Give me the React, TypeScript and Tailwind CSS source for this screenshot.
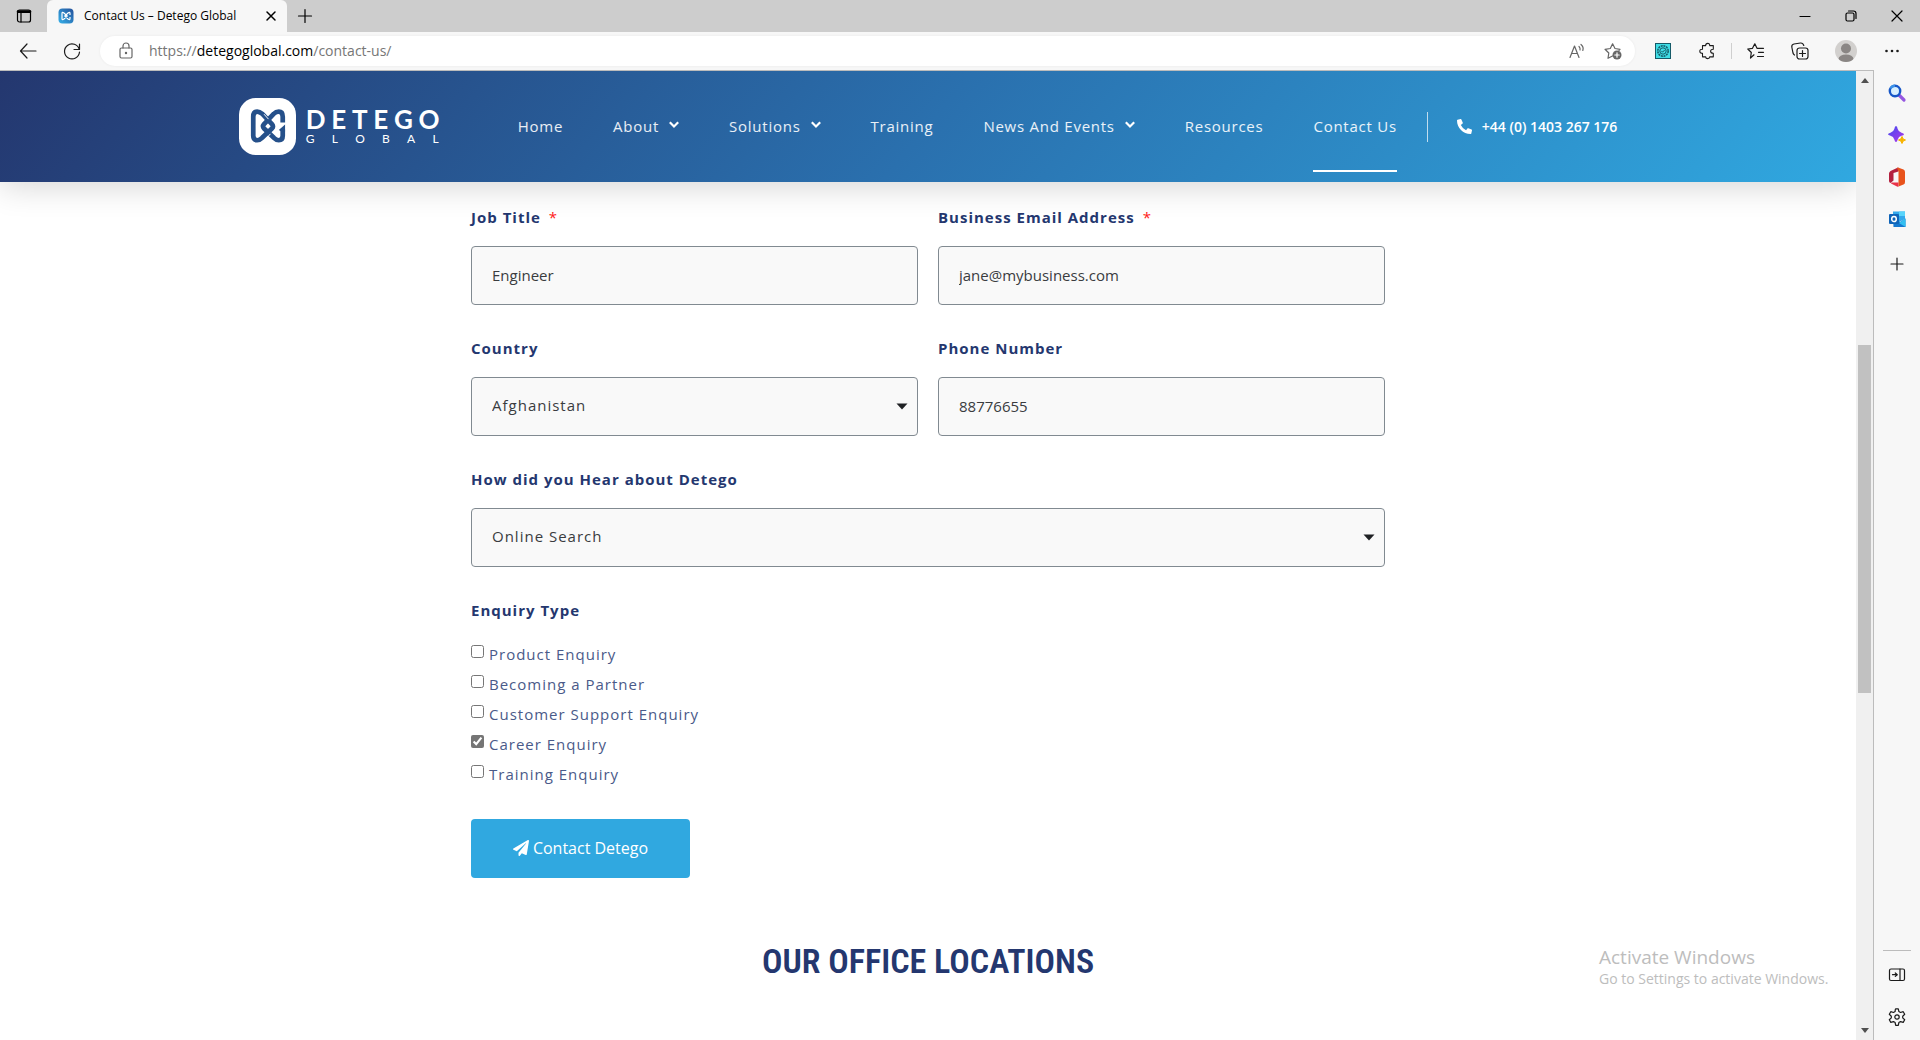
import React from "react";
import { FaPaperPlane, FaPhoneAlt } from "react-icons/fa";

type IconProps = { className?: string; children: React.ReactNode; box?: number };

function Icon({ className = "size-5", children, box = 20 }: IconProps) {
  return (
    <svg
      viewBox={`0 0 ${box} ${box}`}
      className={className}
      fill="none"
      stroke="currentColor"
      strokeWidth="1.2"
      strokeLinecap="round"
      strokeLinejoin="round"
      aria-hidden="true"
    >
      {children}
    </svg>
  );
}

function DetegoMark({ className }: { className: string }) {
  return (
    <svg viewBox="0 0 58 58" className={className} aria-hidden="true">
      <rect width="58" height="58" rx="17" fill="#fff" />
      <g fill="none" stroke="#25508a" strokeWidth="4.8" strokeLinejoin="round">
        <path d="M14.500 19V38.500Q14.500 43 18.500 43Q21 43 23.500 40.500L33.500 31Q35.500 29 33.500 26.500L23.500 16Q21 13.800 18.500 13.800Q14.500 13.800 14.500 19Z" />
        <path d="M44.500 25V19Q44.500 13.800 40.500 13.800Q37.500 13.800 35.500 16L25.500 26.500Q23.500 29 25.500 31L35.500 40.500Q38 43 40.500 43Q44.500 43 44.500 38.500V32" />
      </g>
      <path d="M25.500 16.500L30 21.500M28 41L32 36.500" stroke="#fff" strokeWidth="1" />
      <path d="M46.900 27L40.500 32.500L43 34H46.900Z" fill="#25508a" />
    </svg>
  );
}

function TabStrip() {
  return (
    <div className="flex h-8 items-stretch bg-[#cdcdcd] text-black">
      <button aria-label="Tab actions" className="flex w-[47px] items-center justify-center">
        <Icon className="size-4" box={16}>
          <rect x="1.500" y="2" width="13" height="12" rx="2" />
          <path d="M1.500 4.500h13M5 5v9" />
          <path d="M2 3.500h12" strokeWidth="2.500" />
        </Icon>
      </button>
      <div className="flex w-60 items-center rounded-t-md bg-[#f7f7f7] pr-[6px] pl-[11px]">
        <svg viewBox="0 0 16 16" className="size-4" aria-hidden="true">
          <defs>
            <linearGradient id="fav" x1="0" y1="1" x2="1" y2="0">
              <stop offset="0" stopColor="#35b1ea" />
              <stop offset="1" stopColor="#24509a" />
            </linearGradient>
          </defs>
          <rect x="0.500" y="0.500" width="15" height="15" rx="4" fill="url(#fav)" />
          <path
            d="M4 5.500V10.500Q4 12.500 6 11L9.200 8L6 5Q4 3.500 4 5.500M12 7V5.500Q12 3.500 10 5L6.800 8L10 11Q12 12.500 12 10.500V9"
            fill="none"
            stroke="#fff"
            strokeWidth="1.200"
          />
        </svg>
        <span className="ml-[10px] flex-1 text-xs whitespace-nowrap">Contact Us – Detego Global</span>
        <button aria-label="Close tab" className="flex size-5 items-center justify-center">
          <Icon className="size-3" box={12}>
            <path d="M2 2l8 8M10 2l-8 8" strokeWidth="1.500" />
          </Icon>
        </button>
      </div>
      <button aria-label="New tab" className="flex w-9 items-center justify-center">
        <Icon className="size-4" box={16}>
          <path d="M8 1.500v13M1.500 8h13" />
        </Icon>
      </button>
      <div className="flex-1" />
      <button aria-label="Minimize" className="flex w-[46px] items-center justify-center">
        <Icon className="size-3" box={12}>
          <path d="M1 6.500h10" />
        </Icon>
      </button>
      <button aria-label="Restore" className="flex w-[46px] items-center justify-center">
        <Icon className="size-3" box={12}>
          <rect x="1" y="3" width="8" height="8" rx="1.500" />
          <path d="M3.500 1H8.500Q11 1 11 3.500V8.500" />
        </Icon>
      </button>
      <button aria-label="Close" className="flex w-[46px] items-center justify-center">
        <Icon className="size-3" box={12}>
          <path d="M1 1l10 10M11 1L1 11" />
        </Icon>
      </button>
    </div>
  );
}

function AddressBar() {
  return (
    <div className="flex h-[38px] items-center bg-[#f7f7f7] pr-[6px] pl-[6px] text-[#1b1b1b]">
      <button aria-label="Back" className="flex w-11 justify-center">
        <Icon>
          <path d="M18 10H2.500M9 3L2.500 10L9 17" />
        </Icon>
      </button>
      <button aria-label="Refresh" className="flex w-11 justify-center">
        <Icon>
          <path d="M17.300 8.500A7.500 7.500 0 1 0 17.500 11M17.500 3v5.500H12" />
        </Icon>
      </button>
      <div className="ml-[6px] flex h-[30px] flex-1 items-center rounded-full bg-white pr-1 pl-4 text-[#666] shadow-[0_0_3px_rgba(0,0,0,0.06)]">
        <Icon>
          <rect x="4" y="7" width="12" height="10" rx="1.500" />
          <path d="M7 7V5a3 3 0 0 1 6 0v2" />
          <circle cx="10" cy="12" r="0.600" fill="currentColor" />
        </Icon>
        <div className="ml-[13px] flex-1 text-sm text-[#767676]">
          https://<span className="text-black">detegoglobal.com</span>/contact-us/
        </div>
        <button aria-label="Read aloud" className="flex w-9 justify-center">
          <Icon className="size-4" box={16}>
            <path d="M1 14.500L5.500 3L10 14.500M2.500 10.500h6M10 3.500Q11.500 5 11 7M12 1.500Q15 4 13.800 7.500" />
          </Icon>
        </button>
        <button aria-label="Add to favorites" className="flex w-9 justify-center">
          <Icon className="size-5">
            <path d="M9.500 15L5 17.300L5.800 12L2 8.300L7.300 7.500L9.600 2.800L12 7.500L17 8.300L16 9.300" />
            <circle cx="14" cy="14" r="4.500" fill="#666" stroke="none" />
            <path d="M14 11.800v4.400M11.800 14h4.400" stroke="#fff" />
          </Icon>
        </button>
      </div>
      <div className="ml-[6px] flex items-center">
        <button aria-label="Extension" className="flex w-11 justify-center">
          <svg viewBox="0 0 16 16" className="size-4" fill="none" stroke="#155a68" aria-hidden="true">
            <rect x="0.500" y="0.500" width="15" height="15" fill="#3fdde5" />
            <circle cx="8" cy="8" r="5.200" strokeWidth="1.500" strokeDasharray="2 0.700" />
            <circle cx="8" cy="8" r="3.200" />
            <path d="M6.500 8l1 1.200L9.700 7" />
          </svg>
        </button>
        <button aria-label="Extensions" className="flex w-11 justify-center">
          <Icon className="size-[18px]">
            <path d="M5 4H8.500Q8.500 1.500 10.800 1.500T13 4H17V8Q14 8 14 10.200T17 12.500V16.500H13Q13 18.500 10.800 18.500T8.500 16.500H5V12.500Q2 12.500 2 10.200T5 8Z" />
          </Icon>
        </button>
        <div className="mx-[2px] h-4 w-px bg-[#cfcfcf]" />
        <button aria-label="Favorites" className="flex w-11 justify-center">
          <Icon className="size-5">
            <path d="M8 13.800L4.500 17L5.300 11.500L1.800 8L6.500 7.300L8.800 2.800L11 7.300H17.500M12.500 11.300h5M11.500 15.500h6" />
          </Icon>
        </button>
        <button aria-label="Collections" className="flex w-11 justify-center">
          <Icon className="size-5">
            <rect x="7" y="7" width="11" height="11" rx="2.500" />
            <path d="M12.500 9.500v6M9.500 12.500h6M4.500 14Q3.300 13.300 3 12L1.800 6Q1.500 3.500 4 3L10.500 2Q13 1.800 13.800 4.500" />
          </Icon>
        </button>
        <button aria-label="Profile" className="mx-[2px] flex w-11 justify-center">
          <svg viewBox="0 0 22 22" className="size-[22px]" aria-hidden="true">
            <clipPath id="avatar">
              <circle cx="11" cy="11" r="11" />
            </clipPath>
            <g clipPath="url(#avatar)">
              <rect width="22" height="22" fill="#d2d0ce" />
              <circle cx="11" cy="8.500" r="5" fill="#8a8684" />
              <ellipse cx="11" cy="19" rx="7.500" ry="4.500" fill="#8a8684" />
            </g>
          </svg>
        </button>
        <button aria-label="Settings and more" className="flex w-11 justify-center">
          <Icon className="size-4" box={16}>
            <g fill="currentColor" stroke="none">
              <circle cx="2.500" cy="8" r="1.300" />
              <circle cx="8" cy="8" r="1.300" />
              <circle cx="13.500" cy="8" r="1.300" />
            </g>
          </Icon>
        </button>
      </div>
    </div>
  );
}

const navItems = [
  { label: "Home" },
  { label: "About", menu: true },
  { label: "Solutions", menu: true },
  { label: "Training" },
  { label: "News And Events", menu: true },
  { label: "Resources" },
  { label: "Contact Us", active: true },
];

function SiteHeader() {
  return (
    <header className="relative z-10 flex h-[111px] items-center justify-center bg-linear-[130deg,#24376f_0%,#2a70ae_50%,#30a8e0_100%] text-white shadow-[0_5px_30px_rgba(0,0,0,0.16)]">
      <a href="#home" aria-label="Detego Global" className="flex items-center">
        <DetegoMark className="size-[57px]" />
        <span className="ml-[10px] flex w-[134px] flex-col gap-[2px] pb-[2px] font-[Lato]">
          <span className="flex justify-between text-[26px] leading-6 font-bold">
            {"DETEGO".split("").map((c, i) => (
              <span key={i}>{c}</span>
            ))}
          </span>
          <span className="flex justify-between pr-px text-xs leading-3">
            {"GLOBAL".split("").map((c, i) => (
              <span key={i}>{c}</span>
            ))}
          </span>
        </span>
      </a>
      <nav className="ml-[78px] flex gap-[50px] text-[15px] tracking-wider text-white/90">
        {navItems.map((item) => (
          <a
            key={item.label}
            href="#nav"
            className={
              item.active
                ? "flex h-[90px] items-center border-y-2 border-transparent border-b-white whitespace-nowrap"
                : "flex h-[90px] items-center border-y-2 border-transparent whitespace-nowrap"
            }
          >
            {item.label}
            {item.menu && (
              <svg viewBox="0 0 10 8" className="mb-[3px] ml-[10px] h-2 w-[10px]" fill="none" stroke="#fff" strokeWidth="2.2" aria-hidden="true">
                <path d="M0.800 1.300L5 5.500L9.200 1.300" />
              </svg>
            )}
          </a>
        ))}
      </nav>
      <a
        href="tel:+4401403267176"
        className="ml-[30px] flex h-[30px] items-center border-l border-white/70 pl-[29px] text-sm font-semibold whitespace-nowrap"
      >
        <FaPhoneAlt className="mr-[10px] size-[15px]" />
        +44 (0) 1403 267 176
      </a>
    </header>
  );
}

const labelClass = "mb-[18px] block text-[15px] leading-[22px] font-bold tracking-[1px] text-[#24376f]";
const fieldClass =
  "block h-[59px] w-full rounded border border-[#818a91] bg-[#f9f9f9] px-5 pb-[2px] text-[15px] text-[#3a3c3f]";

type TextFieldProps = { id: string; label: string; value: string; type?: string; required?: boolean };

function TextField({ id, label, value, type = "text", required }: TextFieldProps) {
  return (
    <div>
      <label htmlFor={id} className={labelClass}>
        {label}
        {required && <span className="ml-2 font-normal text-[#ff2020]">*</span>}
      </label>
      <input id={id} type={type} defaultValue={value} className={fieldClass} />
    </div>
  );
}

function SelectField({ id, label, value, wide }: { id: string; label: string; value: string; wide?: boolean }) {
  return (
    <div className={wide ? "col-span-2" : ""}>
      <label htmlFor={id} className={labelClass}>
        {label}
      </label>
      <div className="relative">
        <select id={id} defaultValue={value} className={`${fieldClass} appearance-none tracking-[1px]`}>
          <option>{value}</option>
        </select>
        <svg viewBox="0 0 12 7" className="pointer-events-none absolute top-[26px] right-[10px] h-[7px] w-3" aria-hidden="true">
          <path d="M0.500 0.500h11L6 6.500Z" fill="#1f2124" />
        </svg>
      </div>
    </div>
  );
}

const enquiries = [
  { label: "Product Enquiry" },
  { label: "Becoming a Partner" },
  { label: "Customer Support Enquiry" },
  { label: "Career Enquiry", checked: true },
  { label: "Training Enquiry" },
];

function ContactForm() {
  return (
    <form className="mx-auto w-full max-w-[914px] pt-6">
      <div className="grid grid-cols-2 gap-x-5 gap-y-8">
        <TextField id="job" label="Job Title" value="Engineer" required />
        <TextField id="email" type="email" label="Business Email Address" value="jane@mybusiness.com" required />
        <SelectField id="country" label="Country" value="Afghanistan" />
        <TextField id="phone" type="tel" label="Phone Number" value="88776655" />
        <SelectField id="source" label="How did you Hear about Detego" value="Online Search" wide />
        <fieldset className="col-span-2">
          <legend className={labelClass}>Enquiry Type</legend>
          {enquiries.map((e) => (
            <label
              key={e.label}
              className="flex h-[30px] items-center gap-[5px] text-[15px] tracking-[1px] text-[#4a5a89]"
            >
              <input type="checkbox" defaultChecked={e.checked} className="mb-[5px] size-[13px] accent-[#757575]" />
              {e.label}
            </label>
          ))}
        </fieldset>
      </div>
      <button
        type="button"
        className="mt-[30px] flex h-[59px] w-[219px] items-center justify-center gap-1 rounded bg-[#30a8e0] pb-[2px] text-base font-medium text-white"
      >
        <FaPaperPlane className="size-4" />
        Contact Detego
      </button>
    </form>
  );
}

function Scrollbar() {
  return (
    <div className="flex w-[17px] shrink-0 flex-col items-center justify-between bg-[#f0f0f0] py-[7px]">
      <svg viewBox="0 0 8 5" className="h-[5px] w-2" aria-hidden="true">
        <path d="M0 5h8L4 0Z" fill="#505050" />
      </svg>
      <div className="flex w-full flex-1 flex-col px-[2px] py-1">
        <div className="flex-[257]" />
        <div className="flex-[347] bg-[#c1c1c1]" />
        <div className="flex-[330]" />
      </div>
      <svg viewBox="0 0 8 5" className="h-[5px] w-2" aria-hidden="true">
        <path d="M0 0h8L4 5Z" fill="#505050" />
      </svg>
    </div>
  );
}

function Sidebar() {
  return (
    <aside className="flex w-[47px] shrink-0 flex-col items-center border-l border-[#bcbcbc] bg-[#f7f7f7] pt-[13px] pb-[13px] text-[#1b1b1b]">
      <div className="flex flex-col gap-[22px]">
        <button aria-label="Search">
          <svg viewBox="0 0 20 20" className="size-5" aria-hidden="true">
            <path d="M12 12l5 5" stroke="#9557e0" strokeWidth="3.200" strokeLinecap="round" />
            <circle cx="8" cy="8" r="5.200" fill="#d8f0ff" stroke="#1757c8" strokeWidth="2.400" />
            <path d="M3.500 5.500A5.200 5.200 0 0 1 8 2.800" fill="none" stroke="#3b91e8" strokeWidth="2.400" />
          </svg>
        </button>
        <button aria-label="Discover">
          <svg viewBox="0 0 20 20" className="size-5" aria-hidden="true">
            <defs>
              <linearGradient id="spark" x1="0" y1="0" x2="1" y2="1">
                <stop offset="0" stopColor="#3f4cf0" />
                <stop offset="1" stopColor="#b336e8" />
              </linearGradient>
            </defs>
            <path d="M9 1Q10.200 1 10.700 4Q11.500 7 14.500 7.700Q17 8.300 17 9.300T14.500 10.800Q11.500 11.500 10.700 14.500Q10 17 9 17T7.300 14.500Q6.500 11.500 3.500 10.800Q1 10.200 1 9.300T3.500 7.700Q6.500 7 7.300 4Q7.800 1 9 1Z" fill="url(#spark)" />
            <path d="M15 11.500L16.200 14L18.500 15L16.200 16L15 18.500L13.800 16L11.500 15L13.800 14Z" fill="#f8b400" stroke="#f8b400" strokeLinejoin="round" />
          </svg>
        </button>
        <button aria-label="Office">
          <svg viewBox="0 0 20 20" className="size-5" aria-hidden="true">
            <path d="M11 0.500L3.500 4Q2 5 2 6.500V14Q2 15.500 3.500 16L6.500 13.500V6L11.500 4.500V1Z" fill="#b3213f" />
            <path d="M11 0.500L16.500 2.500Q18 3.300 18 5V15Q18 17 16.500 17.500L11.500 19.500V4.500L10 1Z" fill="#e8531c" />
            <path d="M4.500 15.500H11.500V19.500Q10.500 20 9.500 19.300L4 16.500Z" fill="#ea3349" />
          </svg>
        </button>
        <button aria-label="Outlook">
          <svg viewBox="0 0 20 20" className="size-5" aria-hidden="true">
            <path d="M6 2.500h12V10l-6 3-6-3Z" fill="#32a8ec" />
            <path d="M12 2.500h6V7h-6Z" fill="#58d4fb" />
            <path d="M6 9l7 4 5.500-3.500V18H6.500Z" fill="#1478cf" />
            <path d="M12 14l6.500-4.500V18Z" fill="#33bff0" />
            <rect x="2" y="5" width="10" height="10" rx="1" fill="#0f64b8" />
            <ellipse cx="7" cy="10" rx="2.300" ry="2.600" fill="none" stroke="#fff" strokeWidth="1.500" />
          </svg>
        </button>
      </div>
      <button aria-label="Add" className="mt-[27px]">
        <Icon className="size-4" box={16}>
          <path d="M8 2v12M2 8h12" />
        </Icon>
      </button>
      <div className="flex-1" />
      <div className="h-px w-7 bg-[#bcbcbc]" />
      <button aria-label="Hide sidebar" className="mt-[14px]">
        <Icon className="size-5">
          <rect x="2.500" y="4" width="15" height="11.500" rx="1.500" />
          <path d="M13 4v11.500M5.500 9.700H10M8.300 8l2 1.700l-2 1.700" />
        </Icon>
      </button>
      <button aria-label="Settings" className="mt-[22px]">
        <Icon className="size-5">
          <path d="M8.300 2.500L8.700 1.800H11.300L11.900 4.600L13.500 5.500L16.200 4.700L17.700 7.300L15.700 9.200V10.900L17.700 12.800L16.200 15.400L13.500 14.600L11.900 15.500L11.300 18.300H8.700L8.100 15.500L6.500 14.600L3.800 15.400L2.300 12.800L4.300 10.900V9.200L2.300 7.300L3.800 4.700L6.500 5.500L8.100 4.600Z" />
          <circle cx="10" cy="10" r="2.200" />
        </Icon>
      </button>
    </aside>
  );
}

export default function App() {
  return (
    <div className="flex h-screen flex-col overflow-hidden bg-white font-['Open_Sans',sans-serif]">
      <TabStrip />
      <AddressBar />
      <div className="flex min-h-0 flex-1">
        <div className="flex min-w-0 flex-1 border-t border-[#bcbcbc]">
          <div className="relative min-w-0 flex-1 overflow-hidden">
            <SiteHeader />
            <main>
              <ContactForm />
              <h2 className="mt-[53px] text-center font-['Roboto_Condensed','Liberation_Sans_Narrow',sans-serif] text-[34px] leading-[60px] font-semibold text-[#24376f] uppercase">
                Our Office Locations
              </h2>
            </main>
            <div className="absolute right-5 bottom-[51px] w-[237px] text-[#bdbdbd]">
              <p className="text-[19px] leading-6">Activate Windows</p>
              <p className="text-sm leading-5 whitespace-nowrap">Go to Settings to activate Windows.</p>
            </div>
          </div>
          <Scrollbar />
        </div>
        <Sidebar />
      </div>
    </div>
  );
}
